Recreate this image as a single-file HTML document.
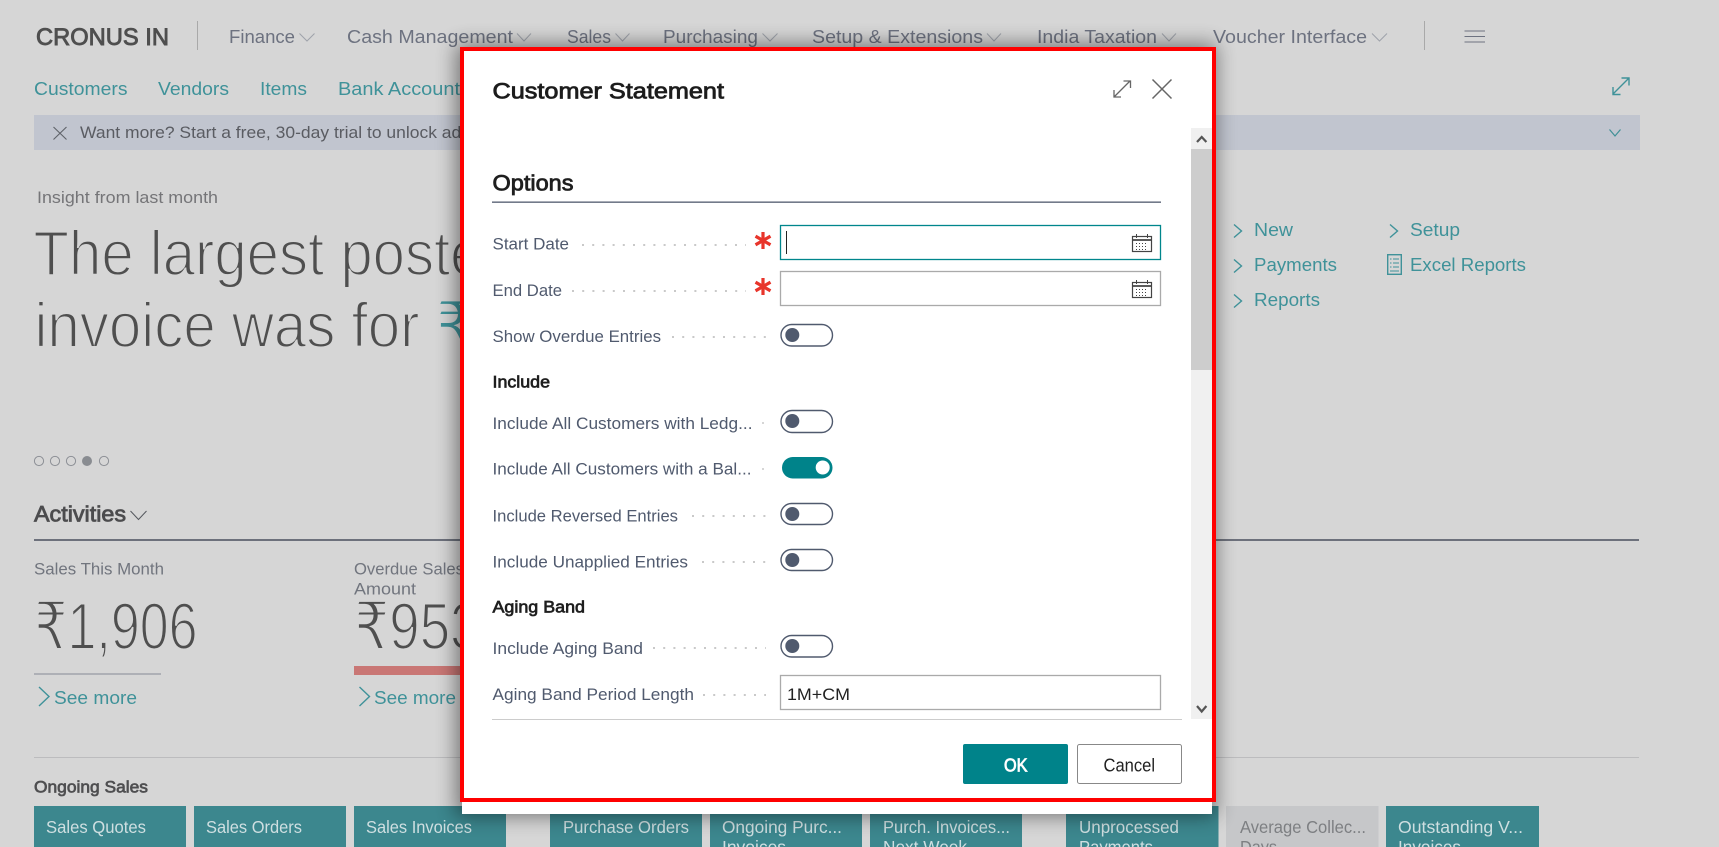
<!DOCTYPE html>
<html lang="en">
<head>
<meta charset="utf-8">
<title>Customer Statement</title>
<style>
html,body{margin:0;padding:0;width:1719px;height:847px;overflow:hidden;background:#d6d6d6}
svg{display:block}
text{font-family:"Liberation Sans","DejaVu Sans",sans-serif;white-space:pre}
.nav{font-size:18px;fill:#6d7280}
.link{font-size:18px;fill:#3f9299}
.lab{font-size:16.5px;fill:#505a6e}
.sec{font-size:17px;fill:#1f1f1f;stroke:#1f1f1f;stroke-width:.7px}
.light{fill:#4f4f4f;stroke:#d6d6d6;stroke-width:1.9px}
.tile{font-size:17.5px;fill:#cfdfe1}
.tileg{font-size:17.5px;fill:#7d7f82}
.ch{fill:none;stroke:#9ea2aa;stroke-width:1}
.tch{fill:none;stroke:#3f9299;stroke-width:1.4}
.dots{stroke:#c9c9c9;stroke-width:2;stroke-dasharray:2 8.2}
.tg{fill:#fff;stroke:#505a6e;stroke-width:1.4}
.kn{fill:#505a6e}
</style>
</head>
<body>
<svg xmlns="http://www.w3.org/2000/svg" width="1719" height="847" viewBox="0 0 1719 847">
<defs>
<filter id="sh" x="-10%" y="-10%" width="120%" height="120%"><feGaussianBlur stdDeviation="10"/></filter>
</defs>
<rect width="1719" height="847" fill="#d6d6d6"/>

<!-- Top nav -->
<text x="36" y="45" font-size="24.5" fill="#4f4f4f" stroke="#4f4f4f" stroke-width=".9" textLength="133" lengthAdjust="spacingAndGlyphs">CRONUS IN</text>
<line x1="197.5" y1="21" x2="197.5" y2="50" stroke="#a9a9a9"/>
<text class="nav" x="229" y="43" textLength="66" lengthAdjust="spacingAndGlyphs">Finance</text>
<path class="ch" d="M299.5 33.5l7.5 7.5 7.5-7.5"/>
<text class="nav" x="347" y="43" textLength="166" lengthAdjust="spacingAndGlyphs">Cash Management</text>
<path class="ch" d="M517 33.5l7 7.5 7-7.5"/>
<text class="nav" x="567" y="43" textLength="44" lengthAdjust="spacingAndGlyphs">Sales</text>
<path class="ch" d="M615.5 33.5l7 7.5 7-7.5"/>
<text class="nav" x="663" y="43" textLength="95" lengthAdjust="spacingAndGlyphs">Purchasing</text>
<path class="ch" d="M762.5 33.5l7.5 7.5 7.5-7.5"/>
<text class="nav" x="812" y="43" textLength="171" lengthAdjust="spacingAndGlyphs">Setup &amp; Extensions</text>
<path class="ch" d="M987 33.5l7 7.5 7-7.5"/>
<text class="nav" x="1037" y="43" textLength="120" lengthAdjust="spacingAndGlyphs">India Taxation</text>
<path class="ch" d="M1162 33.5l7 7.5 7-7.5"/>
<text class="nav" x="1213" y="43" textLength="154" lengthAdjust="spacingAndGlyphs">Voucher Interface</text>
<path class="ch" d="M1372 33.5l7.5 7.5 7.5-7.5"/>
<line x1="1424.5" y1="21" x2="1424.5" y2="50" stroke="#a9a9a9"/>
<path d="M1464.5 31h20.5M1464.5 36.5h20.5M1464.5 42h20.5" stroke="#6d7280" fill="none"/>

<!-- Second row -->
<text class="link" x="34" y="95" textLength="93.5" lengthAdjust="spacingAndGlyphs">Customers</text>
<text class="link" x="158" y="95" textLength="71" lengthAdjust="spacingAndGlyphs">Vendors</text>
<text class="link" x="260" y="95" textLength="47" lengthAdjust="spacingAndGlyphs">Items</text>
<text class="link" x="338" y="95" textLength="132" lengthAdjust="spacingAndGlyphs">Bank Accounts</text>
<path d="M1613 94l16-16M1613 87v7.5h7.5M1621.5 78h7.5v7.5" fill="none" stroke="#3f9299" stroke-width="1.4"/>

<!-- Banner -->
<rect x="34" y="115" width="1606" height="35" fill="#c1c5cf"/>
<path d="M53.5 127l13 12.5M66.5 127l-13 12.5" stroke="#5f6369" stroke-width="1.1" fill="none"/>
<text x="80" y="138" font-size="17" fill="#5a5c62" textLength="390" lengthAdjust="spacingAndGlyphs">Want more? Start a free, 30-day trial to unlock adv</text>
<path d="M1609.5 129.5l5.5 6.5 5.5-6.5" fill="none" stroke="#3f8f96" stroke-width="1.2"/>

<!-- Insight -->
<text x="37" y="203" font-size="16.5" fill="#757578" textLength="181" lengthAdjust="spacingAndGlyphs">Insight from last month</text>
<text class="light" x="33.5" y="275" font-size="63.5" textLength="449" lengthAdjust="spacingAndGlyphs">The largest poste</text>
<text class="light" x="34.5" y="347" font-size="63.5" textLength="385" lengthAdjust="spacingAndGlyphs">invoice was for</text>
<text x="436" y="347" font-size="63.5" fill="#3f9299" stroke="#d6d6d6" stroke-width="1.4">₹</text>

<!-- Right links -->
<g class="tch">
<path d="M1234 224.5l7.5 6.5-7.5 6.5"/><path d="M1234 259.5l7.5 6.5-7.5 6.5"/><path d="M1234 294.5l7.5 6.5-7.5 6.5"/><path d="M1390 224.5l7.5 6.5-7.5 6.5"/>
</g>
<text class="link" x="1254" y="236" textLength="39" lengthAdjust="spacingAndGlyphs">New</text>
<text class="link" x="1254" y="271" textLength="83" lengthAdjust="spacingAndGlyphs">Payments</text>
<text class="link" x="1254" y="306" textLength="66" lengthAdjust="spacingAndGlyphs">Reports</text>
<text class="link" x="1410" y="236" textLength="50" lengthAdjust="spacingAndGlyphs">Setup</text>
<text class="link" x="1410" y="271" textLength="116" lengthAdjust="spacingAndGlyphs">Excel Reports</text>
<rect x="1387.7" y="254.7" width="13.6" height="19.6" fill="none" stroke="#3f9299" stroke-width="1.4"/>
<path d="M1390 259h1.5M1393 259h6M1390 263h1.5M1393 263h6M1390 267h1.5M1393 267h6M1390 271h9" stroke="#3f9299" fill="none"/>

<!-- Dots -->
<g fill="none" stroke="#8d9096" stroke-width="1">
<circle cx="39" cy="461" r="4.6"/><circle cx="55" cy="461" r="4.6"/><circle cx="71" cy="461" r="4.6"/><circle cx="104" cy="461" r="4.6"/>
</g>
<circle cx="87" cy="461" r="5" fill="#898c91"/>

<!-- Activities -->
<text x="34" y="521.5" font-size="22" fill="#4c4c4e" stroke="#4c4c4e" stroke-width=".8" textLength="92" lengthAdjust="spacingAndGlyphs">Activities</text>
<path d="M130.5 511l8 8.5 8-8.5" fill="none" stroke="#55585e" stroke-width="1"/>
<rect x="34" y="539" width="1605" height="2" fill="#6d717c"/>
<text x="34" y="574.5" font-size="16.5" fill="#71757e" textLength="130" lengthAdjust="spacingAndGlyphs">Sales This Month</text>
<text x="354" y="574.5" font-size="16.5" fill="#71757e" textLength="110" lengthAdjust="spacingAndGlyphs">Overdue Sales</text>
<text x="354" y="594.5" font-size="16.5" fill="#71757e" textLength="62" lengthAdjust="spacingAndGlyphs">Amount</text>
<text class="light" x="34.5" y="649" font-size="66" textLength="163" lengthAdjust="spacingAndGlyphs">₹1,906</text>
<text class="light" x="354.5" y="649" font-size="66" textLength="126" lengthAdjust="spacingAndGlyphs">₹953</text>
<rect x="34" y="673" width="127" height="2" fill="#aeb0b6"/>
<rect x="354" y="666" width="120" height="9" fill="#c97775"/>
<path class="tch" d="M39 687l10 9.5-10 9.5" stroke-width="1.1"/>
<text class="link" x="54" y="704" font-size="18.5" textLength="83" lengthAdjust="spacingAndGlyphs">See more</text>
<path class="tch" d="M359.5 687l10 9.5-10 9.5" stroke-width="1.1"/>
<text class="link" x="374" y="704" font-size="18.5" textLength="82" lengthAdjust="spacingAndGlyphs">See more</text>

<rect x="34" y="757" width="1605" height="1" fill="#bcbcbe"/>
<text x="34" y="792.5" font-size="17" fill="#4f4f51" stroke="#4f4f51" stroke-width=".7" textLength="114" lengthAdjust="spacingAndGlyphs">Ongoing Sales</text>

<!-- Tiles -->
<g fill="#3c878e">
<rect x="34" y="806" width="152" height="41"/><rect x="194" y="806" width="152" height="41"/><rect x="354" y="806" width="152" height="41"/>
<rect x="550" y="806" width="152" height="41"/><rect x="710" y="806" width="152" height="41"/><rect x="870" y="806" width="152" height="41"/>
<rect x="1066" y="806" width="152.5" height="41"/><rect x="1386" y="806" width="153" height="41"/>
</g>
<rect x="1226" y="806" width="152.5" height="41" fill="#c6c7c9"/>
<text class="tile" x="46" y="833" textLength="100" lengthAdjust="spacingAndGlyphs">Sales Quotes</text>
<text class="tile" x="206" y="833" textLength="96" lengthAdjust="spacingAndGlyphs">Sales Orders</text>
<text class="tile" x="366" y="833" textLength="106" lengthAdjust="spacingAndGlyphs">Sales Invoices</text>
<text class="tile" x="563" y="833" textLength="126" lengthAdjust="spacingAndGlyphs">Purchase Orders</text>
<text class="tile" x="722" y="833" textLength="120" lengthAdjust="spacingAndGlyphs">Ongoing Purc...</text>
<text class="tile" x="722" y="853" textLength="64" lengthAdjust="spacingAndGlyphs">Invoices</text>
<text class="tile" x="883" y="833" textLength="127" lengthAdjust="spacingAndGlyphs">Purch. Invoices...</text>
<text class="tile" x="883" y="853" textLength="84" lengthAdjust="spacingAndGlyphs">Next Week</text>
<text class="tile" x="1079" y="833" textLength="100" lengthAdjust="spacingAndGlyphs">Unprocessed</text>
<text class="tile" x="1079" y="853" textLength="74" lengthAdjust="spacingAndGlyphs">Payments</text>
<text class="tileg" x="1240" y="833" textLength="126" lengthAdjust="spacingAndGlyphs">Average Collec...</text>
<text class="tileg" x="1240" y="853" textLength="37" lengthAdjust="spacingAndGlyphs">Days</text>
<text class="tile" x="1398" y="833" textLength="125" lengthAdjust="spacingAndGlyphs">Outstanding V...</text>
<text class="tile" x="1398" y="853" textLength="63" lengthAdjust="spacingAndGlyphs">Invoices</text>

<!-- Dialog -->
<rect x="456" y="44" width="760" height="772" fill="#000" opacity=".46" filter="url(#sh)"/>
<rect x="462" y="47" width="750" height="767" fill="#fff"/>
<rect x="462" y="49" width="752" height="751" fill="none" stroke="#f00" stroke-width="4"/>

<text x="492.5" y="98.5" font-size="22.5" fill="#1c1c1c" stroke="#1c1c1c" stroke-width=".8" textLength="231.5" lengthAdjust="spacingAndGlyphs">Customer Statement</text>
<path d="M1114 97l16-16M1114 90v7h7M1123.5 81h7v7" fill="none" stroke="#666" stroke-width="1.3"/>
<path d="M1152.5 79.5l19 19M1171.5 79.5l-19 19" stroke="#666" stroke-width="1.5" fill="none"/>

<!-- Scrollbar -->
<rect x="1191" y="128" width="21" height="591" fill="#f0f0f0"/>
<rect x="1191" y="149" width="21" height="221" fill="#cdcdcd"/>
<path d="M1197 142l4.7-5 4.7 5" fill="none" stroke="#555" stroke-width="2.2"/>
<path d="M1197 706l4.7 5.5 4.7-5.5" fill="none" stroke="#555" stroke-width="2.2"/>

<text x="492.5" y="190.5" font-size="22.5" fill="#1f1f1f" stroke="#1f1f1f" stroke-width=".8" textLength="81" lengthAdjust="spacingAndGlyphs">Options</text>
<rect x="492" y="201.5" width="669" height="1.3" fill="#505a6e"/>

<!-- Start / End date -->
<text class="lab" x="492.5" y="249.3" textLength="76.5" lengthAdjust="spacingAndGlyphs">Start Date</text>
<line class="dots" x1="582" y1="245" x2="746" y2="245"/>
<g stroke="#e8352b" stroke-width="3.2" fill="none" stroke-linecap="butt">
<path d="M763 232v17M755.5 236.2l15 8.6M770.5 236.2l-15 8.6"/>
<path d="M763 278v17M755.5 282.2l15 8.6M770.5 282.2l-15 8.6"/>
</g>
<rect x="780.5" y="225.5" width="380" height="34" fill="#fff" stroke="#00868c" stroke-width="1.3"/>
<line x1="786.5" y1="231" x2="786.5" y2="254" stroke="#222" stroke-width="1"/>
<text class="lab" x="492.5" y="296.2" textLength="69.5" lengthAdjust="spacingAndGlyphs">End Date</text>
<line class="dots" x1="572" y1="291" x2="746" y2="291"/>
<rect x="780.5" y="271.5" width="380" height="34" fill="#fff" stroke="#aaa" stroke-width="1.3"/>
<g fill="none" stroke="#444">
<rect x="1132.5" y="236.5" width="19" height="15" stroke-width="1.2"/>
<path d="M1132.5 240h19" stroke-width="1.8"/><path d="M1136.5 234v4M1147.5 234v4"/>
<path d="M1136 243.5h12M1136 246.5h12M1136 249.5h12" stroke-width="1" stroke-dasharray="1 2"/>
<rect x="1132.5" y="282.5" width="19" height="15" stroke-width="1.2"/>
<path d="M1132.5 286h19" stroke-width="1.8"/><path d="M1136.5 280v4M1147.5 280v4"/>
<path d="M1136 289.5h12M1136 292.5h12M1136 295.5h12" stroke-width="1" stroke-dasharray="1 2"/>
</g>

<!-- Show overdue -->
<text class="lab" x="492.5" y="342.2" textLength="168.5" lengthAdjust="spacingAndGlyphs">Show Overdue Entries</text>
<line class="dots" x1="672" y1="337" x2="766" y2="337"/>
<rect class="tg" x="781" y="324.5" width="51.5" height="21.5" rx="10.7"/><circle class="kn" cx="792.3" cy="335" r="7"/>

<text class="sec" x="492.5" y="387.3" textLength="57.5" lengthAdjust="spacingAndGlyphs">Include</text>

<text class="lab" x="492.5" y="429" textLength="260" lengthAdjust="spacingAndGlyphs">Include All Customers with Ledg...</text>
<circle cx="763" cy="423" r="1" fill="#c9c9c9"/>
<rect class="tg" x="781" y="410.5" width="51.5" height="22" rx="11"/><circle class="kn" cx="792.3" cy="421" r="7"/>

<text class="lab" x="492.5" y="474.3" textLength="259" lengthAdjust="spacingAndGlyphs">Include All Customers with a Bal...</text>
<circle cx="763" cy="469" r="1" fill="#c9c9c9"/>
<rect x="782" y="457" width="50.5" height="21.5" rx="10.7" fill="#00838a"/><circle cx="822.7" cy="467.5" r="7" fill="#fff"/>

<text class="lab" x="492.5" y="521.5" textLength="185.5" lengthAdjust="spacingAndGlyphs">Include Reversed Entries</text>
<line class="dots" x1="692" y1="516" x2="766" y2="516"/>
<rect class="tg" x="781" y="503.5" width="51.5" height="21" rx="10.5"/><circle class="kn" cx="792.3" cy="514" r="7"/>

<text class="lab" x="492.5" y="567.3" textLength="195.5" lengthAdjust="spacingAndGlyphs">Include Unapplied Entries</text>
<line class="dots" x1="702" y1="562" x2="766" y2="562"/>
<rect class="tg" x="781" y="549.5" width="51.5" height="21" rx="10.5"/><circle class="kn" cx="792.3" cy="560" r="7"/>

<text class="sec" x="492.5" y="612.7" textLength="92.5" lengthAdjust="spacingAndGlyphs">Aging Band</text>

<text class="lab" x="492.5" y="654" textLength="150.5" lengthAdjust="spacingAndGlyphs">Include Aging Band</text>
<line class="dots" x1="653" y1="648" x2="766" y2="648"/>
<rect class="tg" x="781" y="635.5" width="51.5" height="21.5" rx="10.7"/><circle class="kn" cx="792.3" cy="646" r="7"/>

<text class="lab" x="492.5" y="700" textLength="201.5" lengthAdjust="spacingAndGlyphs">Aging Band Period Length</text>
<line class="dots" x1="703" y1="695" x2="766" y2="695"/>
<rect x="780.5" y="675.5" width="380" height="34" fill="#fff" stroke="#aaa" stroke-width="1.3"/>
<text x="787" y="700" font-size="17" fill="#222" textLength="63" lengthAdjust="spacingAndGlyphs">1M+CM</text>

<rect x="492" y="719" width="690" height="1" fill="#ccc"/>

<!-- Buttons -->
<rect x="963" y="744" width="105" height="40" rx="2" fill="#00838a"/>
<text x="1004" y="771.5" font-size="18" fill="#fff" stroke="#fff" stroke-width=".8" textLength="23.5" lengthAdjust="spacingAndGlyphs">OK</text>
<rect x="1077.5" y="744.5" width="104" height="39" rx="2" fill="#fff" stroke="#888"/>
<text x="1103.5" y="771.5" font-size="18" fill="#222" textLength="51.5" lengthAdjust="spacingAndGlyphs">Cancel</text>
</svg>
</body>
</html>
